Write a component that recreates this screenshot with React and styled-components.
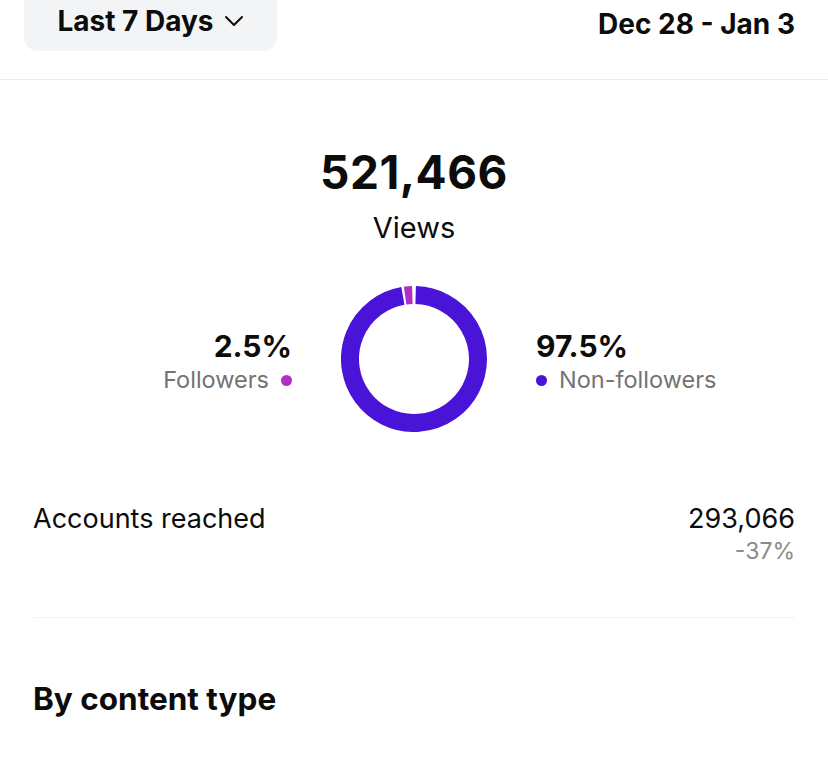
import React from "react";
import styled, { createGlobalStyle } from "styled-components";

const GlobalStyle = createGlobalStyle`
  body {
    margin: 0;
    background: #ffffff;
    font-family: Inter, "Liberation Sans", sans-serif;
    color: #0c0c0c;
  }
`;

const Page = styled.div`
  width: 828px;
  height: 776px;
  overflow: hidden;
`;

const Header = styled.div`
  display: flex;
  justify-content: space-between;
  align-items: flex-start;
  height: 80px;
  padding: 0 33px 0 24px;
  border-bottom: 1px solid #ececec;
  box-sizing: border-box;
`;

const RangeButton = styled.button`
  display: flex;
  align-items: center;
  justify-content: center;
  gap: 10px;
  width: 253px;
  height: 65px;
  margin-top: -14px;
  padding: 4px 0 0;
  border: none;
  border-radius: 14px;
  background: #f3f4f6;
  font-family: inherit;
  font-size: 28px;
  font-weight: 700;
  color: #0c0c0c;
`;

const DateRange = styled.div`
  margin-top: 7px;
  font-size: 28px;
  line-height: 34px;
  font-weight: 700;
`;

const Summary = styled.div`
  display: flex;
  flex-direction: column;
  align-items: center;
  padding-top: 64px;
`;

const Total = styled.div`
  font-size: 46px;
  font-weight: 700;
  line-height: 56px;
  letter-spacing: 0.5px;
`;

const TotalLabel = styled.div`
  margin-top: 9px;
  font-size: 29px;
  line-height: 38px;
`;

const Breakdown = styled.div`
  display: grid;
  grid-template-columns: 1fr auto 1fr;
  align-items: center;
  column-gap: 49px;
  width: 100%;
  margin-top: 39px;
`;

const Share = styled.div`
  display: flex;
  flex-direction: column;
  align-items: ${(p) => (p.$right ? "flex-start" : "flex-end")};
  margin-top: 6px;
`;

const Percent = styled.div`
  font-size: 30px;
  font-weight: 700;
  line-height: 36px;
`;

const Legend = styled.div`
  display: flex;
  align-items: center;
  gap: 12px;
  font-size: 23.5px;
  line-height: 32px;
  color: #737373;
  flex-direction: ${(p) => (p.$right ? "row-reverse" : "row")};
`;

const Dot = styled.span`
  width: 11px;
  height: 11px;
  border-radius: 50%;
  background: ${(p) => p.$color};
`;

const Metric = styled.div`
  display: flex;
  justify-content: space-between;
  align-items: flex-start;
  margin: 70px 33px 0;
  padding-bottom: 51px;
  border-bottom: 1px solid #f3f3f3;
`;

const MetricLabel = styled.div`
  font-size: 27px;
  line-height: 34px;
`;

const MetricValues = styled.div`
  display: flex;
  flex-direction: column;
  align-items: flex-end;
`;

const MetricValue = styled.div`
  font-size: 27px;
  line-height: 34px;
`;

const MetricChange = styled.div`
  font-size: 23px;
  line-height: 30px;
  color: #8a8a8a;
`;

const SectionTitle = styled.h2`
  margin: 61px 33px 0;
  font-size: 31.5px;
  font-weight: 700;
  line-height: 40px;
`;

function arc(cx, cy, r, a0, a1) {
  const p = (a) => {
    const rad = ((a - 90) * Math.PI) / 180;
    return [cx + r * Math.cos(rad), cy + r * Math.sin(rad)];
  };
  const [x0, y0] = p(a0);
  const [x1, y1] = p(a1);
  const large = a1 - a0 > 180 ? 1 : 0;
  return `M ${x0} ${y0} A ${r} ${r} 0 ${large} 1 ${x1} ${y1}`;
}

function Donut() {
  return (
    <svg width="146" height="146" viewBox="0 0 146 146">
      <path d={arc(73, 73, 64, 1.5, 350)} fill="none" stroke="#4a13d8" strokeWidth="18" />
      <path d={arc(73, 73, 64, 352, 358.5)} fill="none" stroke="#b22ec6" strokeWidth="18" />
    </svg>
  );
}

function Chevron() {
  return (
    <svg width="20" height="12" viewBox="0 0 20 12">
      <path d="M2 2 L10 10 L18 2" fill="none" stroke="#0c0c0c" strokeWidth="2" strokeLinecap="round" strokeLinejoin="round" />
    </svg>
  );
}

export default function App() {
  return (
    <Page>
      <GlobalStyle />
      <Header>
        <RangeButton>
          Last 7 Days
          <Chevron />
        </RangeButton>
        <DateRange>Dec 28 - Jan 3</DateRange>
      </Header>

      <Summary>
        <Total>521,466</Total>
        <TotalLabel>Views</TotalLabel>
        <Breakdown>
          <Share>
            <Percent>2.5%</Percent>
            <Legend>
              Followers
              <Dot $color="#b22ec6" />
            </Legend>
          </Share>
          <Donut />
          <Share $right>
            <Percent>97.5%</Percent>
            <Legend $right>
              Non-followers
              <Dot $color="#4a13d8" />
            </Legend>
          </Share>
        </Breakdown>
      </Summary>

      <Metric>
        <MetricLabel>Accounts reached</MetricLabel>
        <MetricValues>
          <MetricValue>293,066</MetricValue>
          <MetricChange>-37%</MetricChange>
        </MetricValues>
      </Metric>

      <SectionTitle>By content type</SectionTitle>
    </Page>
  );
}
